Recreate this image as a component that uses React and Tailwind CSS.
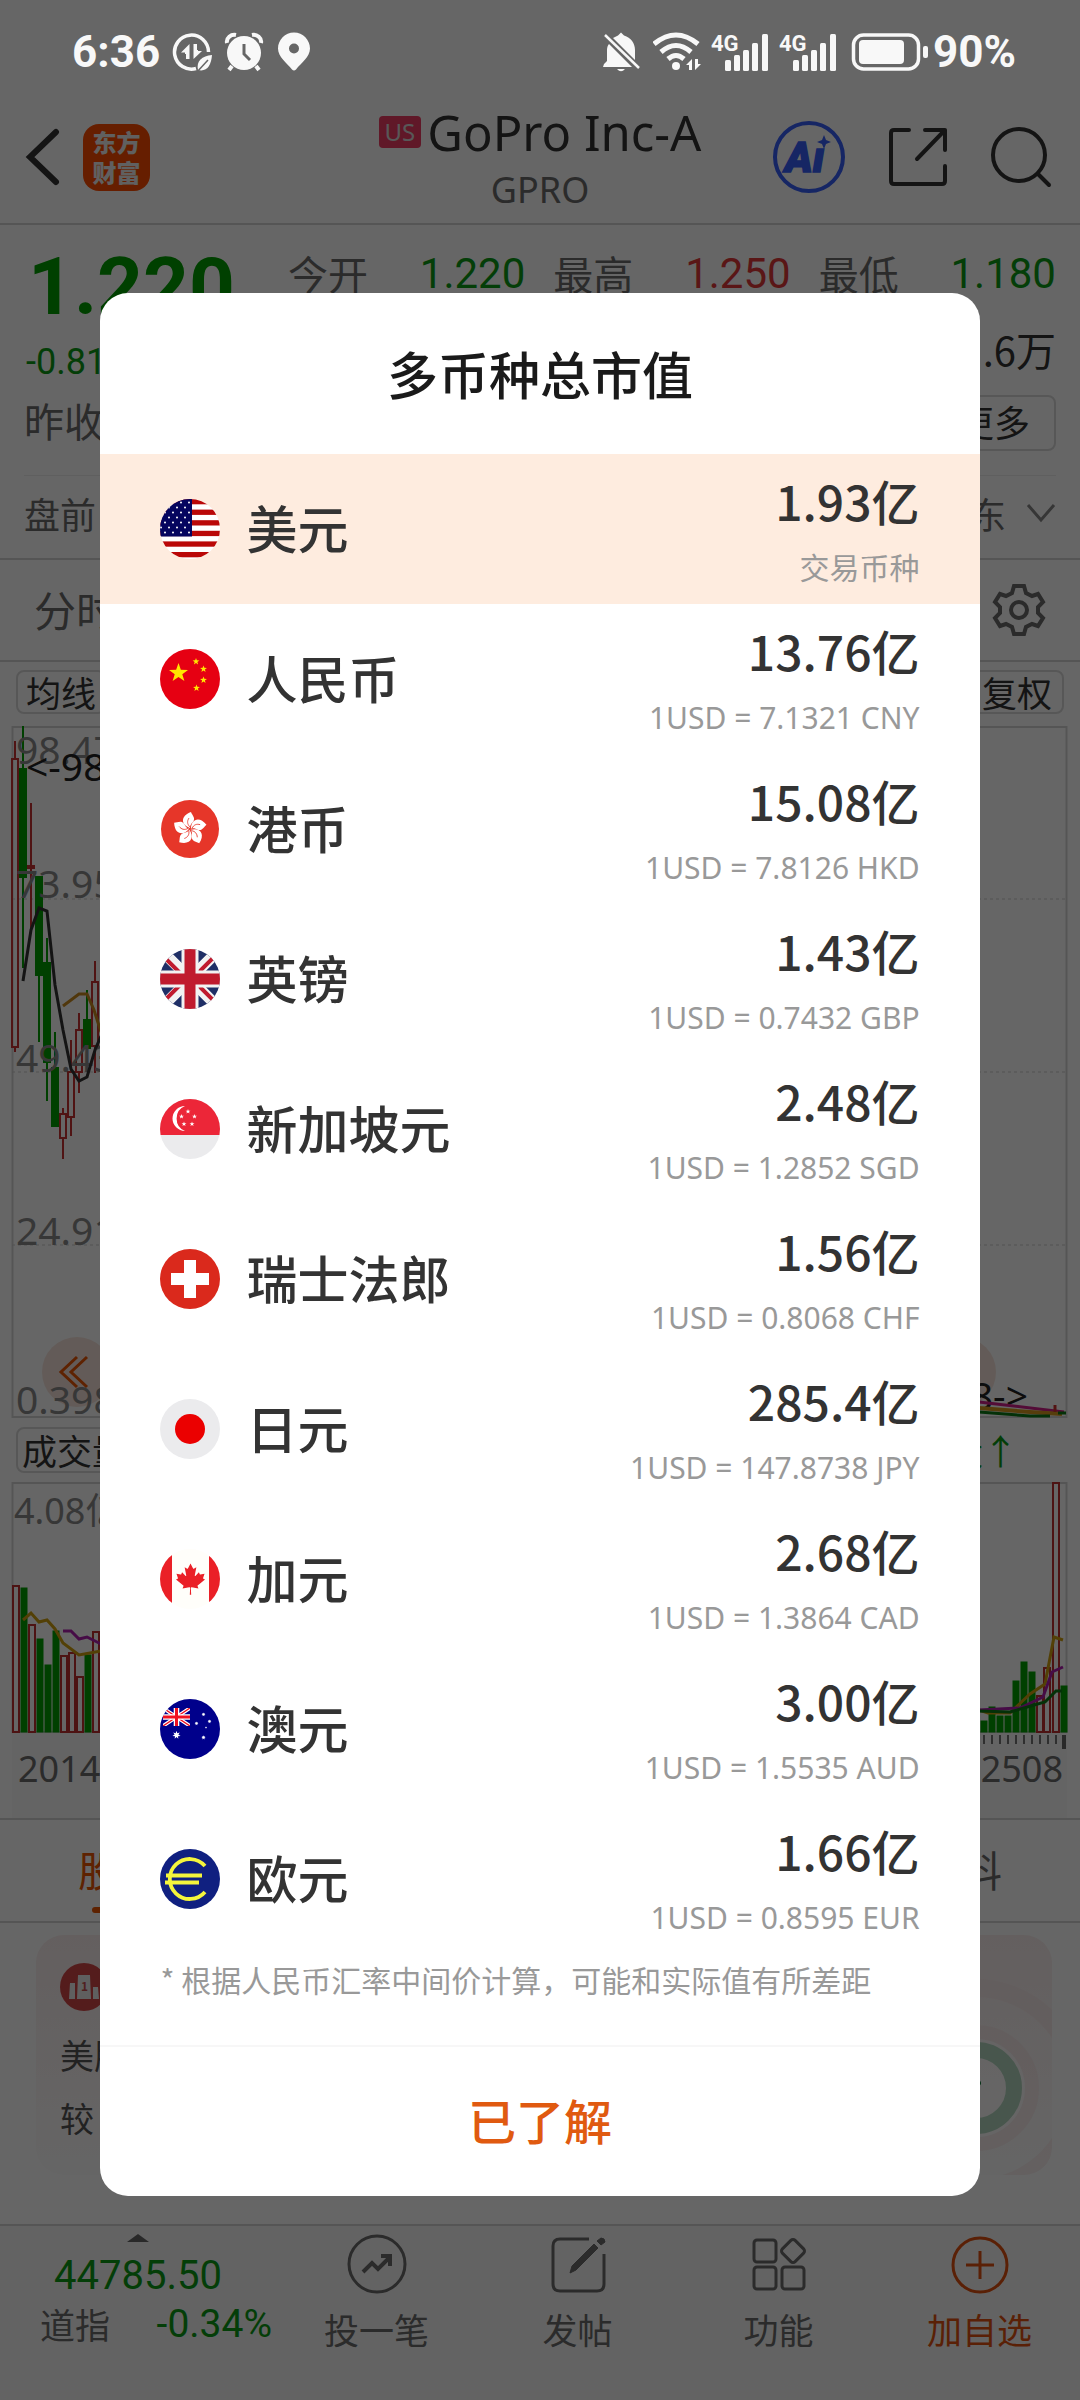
import { useState } from "react";

const star = (cx, cy, r, inner = 0.4, n = 5) =>
  Array.from({ length: n * 2 }, (_, i) => {
    const a = (Math.PI * i) / n - Math.PI / 2;
    const d = i % 2 ? r * inner : r;
    return `${(cx + d * Math.cos(a)).toFixed(2)},${(cy + d * Math.sin(a)).toFixed(2)}`;
  }).join(" ");

const UnionJack = () => (
  <>
    <rect width="60" height="60" fill="#1f2f66" />
    <path d="M0 0L60 60M60 0L0 60" stroke="#f2f2f2" strokeWidth="11" />
    <path
      d="M-1 3L27 31M33 29L61 1M-1 57L27 29M33 31L61 59"
      stroke="#c01b2e"
      strokeWidth="4"
    />
    <path d="M30 0V60M0 30H60" stroke="#f2f2f2" strokeWidth="17" />
    <path d="M30 0V60M0 30H60" stroke="#c01b2e" strokeWidth="11" />
  </>
);

const flags = {
  us: (
    <>
      <rect width="60" height="60" fill="#fff" />
      {[0, 1, 2, 3, 4, 5].map((i) => (
        <rect key={i} y={i * 10.6} width="60" height="5.3" fill="#ba0808" />
      ))}
      <rect width="32" height="37.5" fill="#05055f" />
      {[3.5, 8.5, 13.5, 18.5, 23.5, 28.5, 33.5].map((y, r) =>
        [1, 9, 17, 25].map((x) => (
          <circle key={`${x}-${y}`} cx={x + (r % 2 ? 0 : 4)} cy={y} r="1" fill="#fff" />
        ))
      )}
    </>
  ),
  cn: (
    <>
      <rect width="60" height="60" fill="#e60012" />
      <polygon points={star(18.5, 24, 10)} fill="#ffe600" />
      <polygon points={star(36, 12.5, 3.6)} fill="#ffe600" />
      <polygon points={star(43.5, 20, 3.6)} fill="#ffe600" />
      <polygon points={star(43.5, 31, 3.6)} fill="#ffe600" />
      <polygon points={star(36.5, 39, 3.6)} fill="#ffe600" />
    </>
  ),
  hk: (
    <>
      <rect width="60" height="60" fill="#fff" />
      <circle cx="30" cy="30" r="29" fill="#e63629" />
      {[0, 72, 144, 216, 288].map((a) => (
        <g key={a} transform={`rotate(${a} 30 30)`}>
          <path d="M30 29C21 26 20 17 31 13C32 16 36 19 33 23C31 25 30 26 30 29Z" fill="#fff" />
          <path d="M30 28C27 25 27 22 29 19" stroke="#e63629" strokeWidth="0.8" fill="none" />
        </g>
      ))}
    </>
  ),
  gb: <UnionJack />,
  sg: (
    <>
      <rect width="60" height="60" fill="#ebebed" />
      <rect width="60" height="36" fill="#ec2638" />
      <path d="M25 7A12.5 12.5 0 1 0 25 32A13.5 13.5 0 0 1 25 7Z" fill="#fff" />
      <polygon points={star(28, 12.5, 2.6)} fill="#fff" />
      <polygon points={star(21.5, 17.5, 2.6)} fill="#fff" />
      <polygon points={star(34.5, 17.5, 2.6)} fill="#fff" />
      <polygon points={star(24, 25, 2.6)} fill="#fff" />
      <polygon points={star(32, 25, 2.6)} fill="#fff" />
    </>
  ),
  ch: (
    <>
      <rect width="60" height="60" fill="#da291c" />
      <path d="M30 11V49M11 30H49" stroke="#fff" strokeWidth="12" />
    </>
  ),
  jp: (
    <>
      <rect width="60" height="60" fill="#ebebed" />
      <circle cx="30" cy="30" r="15" fill="#eb0000" />
    </>
  ),
  ca: (
    <>
      <rect width="60" height="60" fill="#fffefa" />
      <rect width="12" height="60" fill="#ea2027" />
      <rect x="49" width="11" height="60" fill="#ea2027" />
      <path
        transform="translate(30.5 30) scale(0.0078)"
        fill="#ea2027"
        d="m-90 2030 45-863a95 95 0 0 0-111-98l-859 151 116-320a65 65 0 0 0-20-73l-941-762 212-99a65 65 0 0 0 34-79l-186-572 542 115a65 65 0 0 0 73-38l105-247 423 454a65 65 0 0 0 111-57l-204-1052 327 189a65 65 0 0 0 91-27l332-652 332 652a65 65 0 0 0 91 27l327-189-204 1052a65 65 0 0 0 111 57l423-454 105 247a65 65 0 0 0 73 38l542-115-186 572a65 65 0 0 0 34 79l212 99-941 762a65 65 0 0 0-20 73l116 320-859-151a95 95 0 0 0-111 98l45 863z"
      />
    </>
  ),
  au: (
    <>
      <rect width="60" height="60" fill="#00008b" />
      <svg x="3" y="9" width="27" height="18" viewBox="0 0 27 18">
        <path d="M0 0L27 18M27 0L0 18" stroke="#fff" strokeWidth="3.6" />
        <path d="M0 0L27 18M27 0L0 18" stroke="#f01020" strokeWidth="1.4" />
        <path d="M13.5 0V18M0 9H27" stroke="#fff" strokeWidth="5.6" />
        <path d="M13.5 0V18M0 9H27" stroke="#f01020" strokeWidth="3" />
      </svg>
      <polygon points={star(16.5, 36, 4.2, 0.45, 7)} fill="#fff" />
      <polygon points={star(43.5, 15.5, 2, 0.5, 7)} fill="#fff" />
      <polygon points={star(36.5, 24.5, 2, 0.5, 7)} fill="#fff" />
      <polygon points={star(49.5, 22.5, 2, 0.5, 7)} fill="#fff" />
      <polygon points={star(46, 28.5, 1.2)} fill="#fff" />
      <polygon points={star(43.5, 38.5, 2.2, 0.5, 7)} fill="#fff" />
    </>
  ),
  eu: (
    <>
      <rect width="60" height="60" fill="#102080" />
      <path
        d="M45 17A20 20 0 1 0 45 43M6 26.500H42M5 33.500H39"
        stroke="#f5f53c"
        strokeWidth="3.8"
        fill="none"
      />
    </>
  ),
};

const currencies = [
  { flag: "us", name: "美元", value: "1.93亿", note: "交易币种" },
  { flag: "cn", name: "人民币", value: "13.76亿", note: "1USD = 7.1321 CNY" },
  { flag: "hk", name: "港币", value: "15.08亿", note: "1USD = 7.8126 HKD" },
  { flag: "gb", name: "英镑", value: "1.43亿", note: "1USD = 0.7432 GBP" },
  { flag: "sg", name: "新加坡元", value: "2.48亿", note: "1USD = 1.2852 SGD" },
  { flag: "ch", name: "瑞士法郎", value: "1.56亿", note: "1USD = 0.8068 CHF" },
  { flag: "jp", name: "日元", value: "285.4亿", note: "1USD = 147.8738 JPY" },
  { flag: "ca", name: "加元", value: "2.68亿", note: "1USD = 1.3864 CAD" },
  { flag: "au", name: "澳元", value: "3.00亿", note: "1USD = 1.5535 AUD" },
  { flag: "eu", name: "欧元", value: "1.66亿", note: "1USD = 0.8595 EUR" },
];

function Flag({ code }) {
  return (
    <svg className="w-[60px] h-[60px] rounded-full shrink-0" viewBox="0 0 60 60">
      {flags[code]}
    </svg>
  );
}

function Signal() {
  return (
    <svg className="w-[58px] h-10" viewBox="0 0 58 40" fill="#f8f8f8">
      <text x="0" y="19" fontSize="22" fontWeight="700" fontFamily="Roboto, sans-serif">
        4G
      </text>
      <rect x="14" y="28" width="6" height="11" rx="1.500" />
      <rect x="23" y="23" width="6" height="16" rx="1.500" />
      <rect x="32" y="18" width="6" height="21" rx="1.500" />
      <rect x="41" y="11" width="6" height="28" rx="1.500" />
      <rect x="51" y="2" width="6" height="37" rx="1.500" />
    </svg>
  );
}

function StatusBar() {
  return (
    <div className="relative z-10 h-[104px] pl-[72px] pr-16 flex items-center justify-between text-[#f8f8f8] font-['Roboto',sans-serif] text-[44px] font-bold">
      <div className="flex items-center gap-3">
        <span>6:36</span>
        <svg className="w-10 h-10" viewBox="0 0 40 40" fill="none">
          <path
            d="M24 36.500A17 17 0 1 1 36.500 20"
            stroke="#f8f8f8"
            strokeWidth="3.500"
          />
          <path
            d="M17.500 27V12L9 20.500H13V22H14V27ZM21.500 12V27L30 19H26V18H25V12Z"
            fill="#f8f8f8"
          />
          <path d="M40 23C30 24 24 29 26 38C35 40 39 34 40 23Z" fill="#f8f8f8" />
          <path d="M25 40L36 28" stroke="#666" strokeWidth="1.500" />
        </svg>
        <svg className="w-10 h-10" viewBox="0 0 40 40" fill="#f8f8f8">
          <circle cx="20" cy="21" r="17" />
          <path
            d="M3 11C2 6 7 2 12 3M37 11C38 6 33 2 28 3M8 34L5 38M32 34L35 38"
            stroke="#f8f8f8"
            strokeWidth="4"
            fill="none"
          />
          <path d="M20 12V22L26 28" stroke="#666" strokeWidth="3" fill="none" />
        </svg>
        <svg className="w-9 h-10" viewBox="0 0 36 40" fill="#f8f8f8">
          <path
            fillRule="evenodd"
            d="M18 0.500C27 0.500 34 8 34 16.500C34 25 25 31 20 37.500Q18 39.500 16 37.500C11 31 2 25 2 16.500C2 8 9 0.500 18 0.500ZM18 11.500A5 5 0 1 0 18 21.500A5 5 0 1 0 18 11.500Z"
          />
        </svg>
      </div>
      <div className="flex items-center gap-2.5">
        <div className="flex items-center gap-3">
          <svg className="w-10 h-10" viewBox="0 0 40 40" fill="#f8f8f8">
            <path d="M20 0.500L23 3.500C30 6 34 11 34 18V28L12 6L17 3.500Z" />
            <path d="M8 12L31 35H2L3 32L6 29V18C6 15 7 13 8 12Z" />
            <path d="M16 37H24Q20 41.500 16 37Z" />
            <path d="M4 3L38 36" stroke="#f8f8f8" strokeWidth="2.500" />
          </svg>
          <svg className="w-12 h-10" viewBox="1 0 48 40" fill="none" stroke="#f8f8f8">
            <path d="M2 12Q24 -6 46 12" strokeWidth="5" />
            <path d="M9 20Q24 7 39 20" strokeWidth="5" />
            <path d="M16 27Q24 20 32 27" strokeWidth="5" />
            <circle cx="24" cy="34" r="4" fill="#f8f8f8" stroke="none" />
            <path d="M40 38V27L34 33H37V38ZM43 27V38L49 32H46V27Z" fill="#f8f8f8" stroke="none" />
          </svg>
        </div>
        <Signal />
        <Signal />
        <div className="ml-1 flex items-center gap-1">
          <svg className="w-[78px] h-10" viewBox="0 0 78 40" fill="#f8f8f8">
            <rect x="2.500" y="3" width="65" height="34" rx="10" fill="none" stroke="#f8f8f8" strokeWidth="3.500" />
            <rect x="8" y="8" width="45" height="24" rx="4" />
            <rect x="72" y="14" width="5" height="12" rx="2" />
          </svg>
          <span>90%</span>
        </div>
      </div>
    </div>
  );
}

function Header() {
  return (
    <header className="h-[121px] border-b-2 border-[#d5d5d5] grid grid-cols-[1fr_auto_1fr] items-start">
      <div className="h-[106px] pl-6 flex items-center gap-[23px]">
        <button aria-label="返回">
          <svg className="w-9 h-[60px]" viewBox="0 0 36 60" fill="none">
            <path d="M32 5L6 30L32 55" stroke="#333" strokeWidth="6" strokeLinecap="round" />
          </svg>
        </button>
        <div className="w-[67px] h-[67px] rounded-2xl bg-[#ff4d00] text-[#efefef] text-2xl leading-[30px] font-black flex flex-col items-center justify-center">
          <span>东方</span>
          <span>财富</span>
        </div>
      </div>
      <div className="text-center font-['Noto_Sans',sans-serif]">
        <div className="flex items-center justify-center gap-1.5">
          <span className="bg-[#f03c64] text-[#ddd] text-2xl leading-8 rounded px-1.5">US</span>
          <h1 className="text-[49px] leading-[56px] text-[#333]">GoPro Inc-A</h1>
        </div>
        <div className="text-4xl leading-[60px] text-[#6b6b6b]">GPRO</div>
      </div>
      <div className="h-[106px] pr-7 flex items-center justify-end gap-[41px]">
        <button aria-label="Ai">
          <svg className="w-[74px] h-[74px]" viewBox="0 0 74 74" fill="none">
            <circle cx="37" cy="37" r="34" stroke="#375ffa" strokeWidth="4" />
            <text
              x="13"
              y="52"
              fontSize="42"
              fontWeight="900"
              fontStyle="italic"
              fontFamily="Roboto, sans-serif"
              fill="#375ffa"
              stroke="#375ffa"
              strokeWidth="1.500"
            >
              Aı
            </text>
            <path d="M52 15L54 20L59 22L54 24L52 29L50 24L45 22L50 20Z" fill="#375ffa" />
          </svg>
        </button>
        <button aria-label="分享">
          <svg className="w-[62px] h-[62px]" viewBox="0 0 62 62" fill="none" stroke="#333" strokeWidth="4" strokeLinecap="round" strokeLinejoin="round">
            <path d="M22 4H7Q4 4 4 7V55Q4 58 7 58H55Q58 58 58 55V40M38 4H58V24M58 4L30 33" />
          </svg>
        </button>
        <button aria-label="搜索">
          <svg className="w-[62px] h-[62px]" viewBox="0 0 62 62" fill="none" stroke="#333" strokeWidth="4" strokeLinecap="round">
            <circle cx="29" cy="29" r="26" />
            <path d="M48 48L59 59" />
          </svg>
        </button>
      </div>
    </header>
  );
}

function Quote() {
  const prices = [
    { label: "今开", value: "1.220", color: "text-[#0a9b14]" },
    { label: "最高", value: "1.250", color: "text-[#e03838]" },
    { label: "最低", value: "1.180", color: "text-[#0a9b14]" },
  ];
  return (
    <section className="px-6">
      <div className="pt-2.5 pb-4 border-b border-[#eee] flex">
        <div className="w-[264px] font-['Roboto','Noto_Sans_CJK_SC',sans-serif]">
          <div className="h-[100px] pl-1 pt-1 flex items-center text-[80px] leading-none font-bold text-[#00a000]">
            1.220
          </div>
          <div className="h-[54px] pl-0.5 flex items-center text-4xl text-[#0a9b14]">-0.81</div>
          <div className="h-[70px] flex items-center text-[40px] text-[#6b6b6b]">昨收</div>
        </div>
        <div className="flex-1">
          <div className="h-[76px] flex items-center gap-7">
            {prices.map((p) => (
              <div key={p.label} className="flex-1 flex items-center justify-between">
                <span className="text-[40px] text-[#6b6b6b]">{p.label}</span>
                <span className={`text-[42px] font-['Roboto',sans-serif] ${p.color}`}>{p.value}</span>
              </div>
            ))}
          </div>
          <div className="h-[76px] flex items-center justify-end text-[40px] text-[#333]">.6万</div>
          <div className="h-[72px] flex items-center justify-end">
            <button className="h-[56px] px-6 pb-1 border-2 border-[#dadada] rounded-lg text-4xl leading-none text-[#333]">
              更多
            </button>
          </div>
        </div>
      </div>
      <div className="h-[82px] pb-2 flex items-center justify-between text-4xl text-[#6b6b6b]">
        <span>盘前</span>
        <span className="flex items-center gap-5">
          东
          <svg className="w-[30px] h-5" viewBox="0 0 30 20" fill="none">
            <path d="M2 2L15 17L28 2" stroke="#888" strokeWidth="3" />
          </svg>
        </span>
      </div>
    </section>
  );
}

// [x, bodyTop, bodyBottom, wickTop, wickBottom, rising]
const candles = [
  [15, 33, 321, 15, 326, true],
  [23, 43, 151, 0, 242, false],
  [31, 140, 142, 77, 204, true],
  [39, 151, 249, 151, 316, false],
  [47, 237, 336, 212, 375, false],
  [55, 342, 400, 306, 400, false],
  [63, 388, 412, 382, 433, true],
  [71, 346, 391, 314, 410, true],
  [79, 304, 346, 287, 367, true],
  [87, 294, 322, 264, 340, false],
  [95, 256, 320, 235, 347, true],
];

// [x, top, rising]
const volumes = [
  [12, 103, true], [20, 105, false], [28, 142, true], [36, 156, false],
  [44, 182, false], [52, 148, false], [60, 173, true], [68, 170, true],
  [76, 194, true], [84, 172, false], [92, 149, true],
  [980, 238, false], [988, 224, false], [996, 233, false], [1004, 233, false],
  [1012, 198, false], [1020, 179, false], [1028, 189, false], [1036, 213, true],
  [1043, 185, true], [1052, 0, true], [1060, 203, false],
];

function PriceChart() {
  return (
    <svg className="block w-full" viewBox="0 0 1080 692" fill="none" fontFamily="'Noto Sans', sans-serif" fontSize="39">
      <rect x="12.500" y="1" width="1054" height="690" stroke="#d5d5d5" strokeWidth="2" />
      <path d="M12 173H1067M12 346H1067M12 519H1067" stroke="#ccc" strokeDasharray="3 3" />
      <circle cx="77" cy="646" r="35" fill="#f7e4dc" />
      <circle cx="961" cy="646" r="35" fill="#f7e4dc" />
      <path d="M77 631L61 646L77 661M87 631L71 646L87 661" stroke="#ea5504" strokeWidth="3" />
      {candles.map(([x, t, b, wt, wb, up]) => (
        <g key={x} stroke={up ? "#c83232" : "#00a000"} strokeWidth="2">
          <path d={up ? `M${x} ${wt}V${t}M${x} ${b}V${wb}` : `M${x} ${wt}V${wb}`} />
          <rect x={x - 3} y={t} width="6" height={b - t} fill={up ? "none" : "#00a000"} />
        </g>
      ))}
      <g fill="#8a8a8a">
        <text x="16" y="38">98.47</text>
        <text x="16" y="172">73.95</text>
        <text x="16" y="346">49.43</text>
        <text x="16" y="519">24.91</text>
        <text x="16" y="688">0.398</text>
      </g>
      <text x="26" y="55" fill="#222">&lt;-98</text>
      <text x="1028" y="684" fill="#222" textAnchor="end">8-&gt;</text>
      <path d="M23 255L31 204L39 182L47 185L55 259L63 304L71 343L79 355L87 351L95 324L101 310" stroke="#333" strokeWidth="3" />
      <path d="M63 280L79 268H87L94 284L101 306" stroke="#c88a20" strokeWidth="3" />
      <path d="M979 676L1064 686" stroke="#d0208a" strokeWidth="3" />
      <path d="M979 682L1030 686L1062 688" stroke="#d89a20" strokeWidth="4" />
      <path d="M979 686L1030 690H1050M1058 687H1066" stroke="#0a7a14" strokeWidth="3" />
      <path d="M1055 679V686" stroke="#d03030" strokeWidth="3" />
    </svg>
  );
}

function VolumeChart() {
  return (
    <svg className="block w-full" viewBox="0 0 1080 336" fill="none" fontFamily="'Noto Sans', 'Noto Sans CJK SC', sans-serif" fontSize="36">
      <rect x="12" y="250" width="1055" height="86" fill="#f9f9f9" />
      <rect x="12.500" y="1" width="1054" height="249" stroke="#d5d5d5" strokeWidth="2" />
      {volumes.map(([x, t, up]) => (
        <rect
          key={x}
          x={x + 1}
          y={t + 1}
          width="6"
          height={249 - t}
          stroke={up ? "#c03030" : "#00a000"}
          strokeWidth={up ? 2 : 1}
          fill={up ? "none" : "#00a000"}
        />
      ))}
      <path d="M23 138L31 131L39 140L47 138L55 147L63 161L79 173L101 169M979 228L988 231H1010L1030 212L1045 202L1054 155L1063 158" stroke="#d0a010" strokeWidth="3" />
      <path d="M63 149H71L79 157L87 155L101 162M979 228L1020 226L1043 215L1052 190L1063 185" stroke="#b020b0" strokeWidth="3" />
      <path d="M979 229L1010 230L1045 220L1056 209H1062" stroke="#0a7a14" strokeWidth="3" />
      <path d="M984 253V262M992 253V262M1000 253V262M1008 253V262M1016 253V262M1024 253V262M1032 253V262M1040 253V262M1048 253V262M1056 253V262" stroke="#777" strokeWidth="2" />
      <path d="M1064 253V267" stroke="#666" strokeWidth="4" />
      <text x="14" y="42" fill="#8a8a8a">4.08亿</text>
      <text x="18" y="300" fill="#6b6b6b">2014</text>
      <text x="1063" y="300" fill="#6b6b6b" textAnchor="end">2508</text>
    </svg>
  );
}

function Charts() {
  return (
    <section>
      <div className="h-[104px] pl-[34px] pr-[34px] border-y-2 border-[#d5d5d5] flex items-center justify-between">
        <button className="pb-1 text-[42px] text-[#6b6b6b]">分时</button>
        <button aria-label="设置">
          <svg className="w-[54px] h-[54px]" viewBox="0 0 54 54" fill="none" stroke="#6b6b6b" strokeWidth="4">
            <path d="M22 3H32L34 10L40 13L46 11L51 19L46 24V30L51 35L46 43L40 41L34 44L32 51H22L20 44L14 41L8 43L3 35L8 30V24L3 19L8 11L14 13L20 10Z" />
            <circle cx="27" cy="27" r="8" />
          </svg>
        </button>
      </div>
      <div className="h-16 px-4 pt-2 flex items-start justify-between">
        <button className="h-11 px-2 border-2 border-[#dadada] rounded-lg text-[35px] leading-10 text-[#333]">
          均线
        </button>
        <button className="h-11 px-2.5 border-2 border-[#dadada] rounded-lg text-[35px] leading-10 text-[#333]">
          复权
        </button>
      </div>
      <PriceChart />
      <div className="h-16 pl-4 pr-[62px] flex items-center justify-between text-[35px]">
        <button className="h-[46px] px-1 border-2 border-[#dadada] rounded-lg leading-10 text-[#333]">
          成交量
        </button>
        <span className="text-[#0a9b14]">股↑</span>
      </div>
      <VolumeChart />
    </section>
  );
}

function Feed() {
  return (
    <section>
      <div className="h-[105px] px-[78px] border-y-2 border-[#d5d5d5] flex items-stretch justify-between text-[42px]">
        <button className="relative pb-1 text-[#ea5504]">
          股吧
          <span className="absolute left-3.5 bottom-2 w-14 h-1.5 rounded-full bg-[#ea5504]" />
        </button>
        <button className="pb-1 text-[#6b6b6b]">资料</button>
      </div>
      <div className="ml-9 mr-7 mt-3 h-[240px] rounded-[28px] bg-linear-to-b from-[#faeeee] to-[#fdfdfd] overflow-hidden flex justify-between pl-6">
        <div className="pt-7 text-[34px] leading-[63px] text-[#555]">
          <svg className="w-12 h-12 mb-3" viewBox="0 0 48 48">
            <circle cx="24" cy="24" r="24" fill="#d34848" />
            <path d="M10 20H15V36H9ZM18 12H30L31 36H17ZM33 24H38L39 36H33Z" fill="#eee" />
            <text x="21" y="28" fontSize="12" fontWeight="700" fill="#c85050">1</text>
          </svg>
          <p>美股</p>
          <p>较</p>
        </div>
        <svg className="w-[220px] h-[240px]" viewBox="0 0 220 240" fill="none">
          <circle cx="144" cy="153" r="100" stroke="#f6e6e6" strokeWidth="18" opacity="0.6" />
          <circle cx="144" cy="153" r="56" stroke="#f8eaea" strokeWidth="14" opacity="0.8" />
          <circle cx="144" cy="153" r="49" fill="#fff" opacity="0.6" />
          <circle cx="144" cy="153" r="38" stroke="#b4d8c0" strokeWidth="16" />
          <path d="M130 153L146 148" stroke="#1a8040" strokeWidth="6" strokeLinecap="round" />
        </svg>
      </div>
    </section>
  );
}

function BottomNav() {
  return (
    <nav className="h-[176px] border-t-2 border-[#d5d5d5] bg-[#f8f8f8] grid grid-cols-[276px_1fr_1fr_1fr_1fr] text-[35px] text-[#6b6b6b]">
      <div className="pt-2 flex flex-col items-center">
        <svg className="w-[22px] h-2" viewBox="0 0 22 8">
          <path d="M0 8L11 0L22 8Z" fill="#666" />
        </svg>
        <span className="pt-2 text-[40px] leading-[52px] text-[#0a9b14] font-['Roboto',sans-serif]">44785.50</span>
        <div className="w-full pl-10 pr-1 flex items-center justify-between leading-[44px]">
          <span>道指</span>
          <span className="text-[39px] leading-[44px] text-[#0a9b14] font-['Roboto',sans-serif]">-0.34%</span>
        </div>
      </div>
      <button className="pt-2 flex flex-col items-center gap-2.5">
        <svg className="w-[60px] h-[60px]" viewBox="0 0 60 60" fill="none" stroke="#6b6b6b" strokeWidth="3">
          <circle cx="30" cy="30" r="28" />
          <path d="M16 38L25 29L31 35L43 23M34 22H43V32" strokeWidth="4" />
        </svg>
        <span className="leading-[50px]">投一笔</span>
      </button>
      <button className="pt-2 flex flex-col items-center gap-2.5">
        <svg className="w-[60px] h-[60px]" viewBox="0 0 60 60" fill="none" stroke="#6b6b6b" strokeWidth="3">
          <path d="M41 5H12Q5 5 5 12V50Q5 57 12 57H49Q56 57 56 50V20" />
          <path d="M22 39L24 32L46 10L50 14L28 36ZM49 7L53 4Q57 4 57 8L53 11Z" fill="#6b6b6b" strokeWidth="1" />
        </svg>
        <span className="leading-[50px]">发帖</span>
      </button>
      <button className="pt-2 flex flex-col items-center gap-2.5">
        <svg className="w-[60px] h-[60px]" viewBox="0 0 60 60" fill="none" stroke="#6b6b6b" strokeWidth="3">
          <rect x="5" y="6" width="22" height="22" rx="3" />
          <rect x="5" y="33" width="22" height="22" rx="3" />
          <rect x="33" y="33" width="22" height="22" rx="3" />
          <rect x="35" y="8" width="18" height="18" rx="3" transform="rotate(45 44 17)" />
        </svg>
        <span className="leading-[50px]">功能</span>
      </button>
      <button className="pt-2 flex flex-col items-center gap-2.5 text-[#e05210]">
        <svg className="w-[60px] h-[60px]" viewBox="0 0 60 60" fill="none" stroke="#e05210" strokeWidth="3">
          <circle cx="30" cy="31" r="27" />
          <path d="M30 17V45M16 31H44" />
        </svg>
        <span className="leading-[50px]">加自选</span>
      </button>
    </nav>
  );
}

function CurrencyDialog({ onClose }) {
  return (
    <div className="absolute inset-0 pt-[88px] bg-black/60 flex items-center justify-center">
      <div role="dialog" aria-label="多币种总市值" className="w-[81.4%] rounded-[28px] bg-white overflow-hidden">
        <h2 className="h-[161px] flex items-center justify-center text-[51px] font-medium text-[#1a1a1a]">
          多币种总市值
        </h2>
        <ul>
          {currencies.map((c, i) => (
            <li
              key={c.flag}
              className={`h-[150px] px-[60px] flex items-center justify-between ${i === 0 ? "bg-[#feecdf]" : ""}`}
            >
              <div className="flex items-center gap-[26px]">
                <Flag code={c.flag} />
                <span className="pb-0.5 text-[51px] leading-none font-medium text-[#333]">{c.name}</span>
              </div>
              <div className="pb-1 text-right">
                <div className="text-5xl leading-[82px] font-medium text-[#333]">{c.value}</div>
                <div className="text-[30px] leading-[54px] text-[#999] font-['Noto_Sans','Noto_Sans_CJK_SC',sans-serif]">
                  {c.note}
                </div>
              </div>
            </li>
          ))}
        </ul>
        <p className="h-[91px] px-[60px] pt-1 text-[30px] leading-[42px] text-[#999] whitespace-nowrap">
          * 根据人民币汇率中间价计算，可能和实际值有所差距
        </p>
        <button
          className="w-full h-[151px] pb-1 border-t-2 border-[#f7f7f7] text-5xl font-medium text-[#e05a10] cursor-pointer"
          onClick={onClose}
        >
          已了解
        </button>
      </div>
    </div>
  );
}

export default function App() {
  const [open, setOpen] = useState(true);

  return (
    <div className="relative min-h-screen bg-white flex flex-col overflow-hidden font-['Noto_Sans_CJK_SC',sans-serif]">
      <StatusBar />
      <Header />
      <Quote />
      <Charts />
      <Feed />
      <div className="mt-auto">
        <BottomNav />
      </div>
      {open && <CurrencyDialog onClose={() => setOpen(false)} />}
    </div>
  );
}
